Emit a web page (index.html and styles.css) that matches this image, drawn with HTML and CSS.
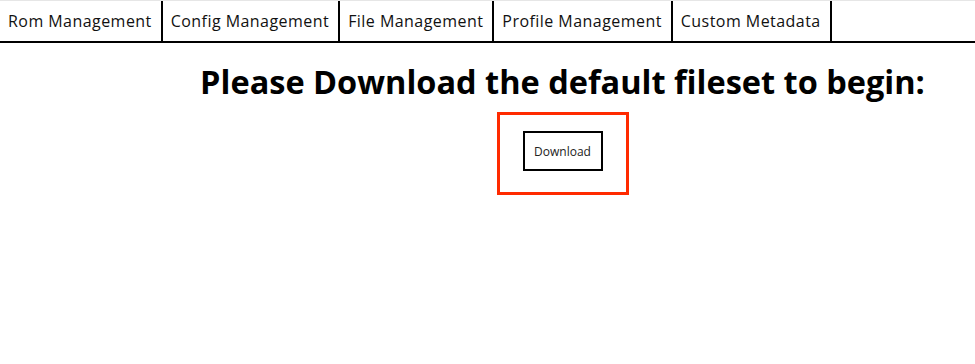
FILE: index.html
```html
<!DOCTYPE html>
<html lang="en">
<head>
  <meta charset="UTF-8">
  <meta name="viewport" content="width=device-width, initial-scale=1.0">
  <title>Fileset Manager</title>
  <link rel="stylesheet" href="styles.css">
</head>
<body>

  <nav class="tabs">
    <a class="tab">Rom Management</a>
    <a class="tab">Config Management</a>
    <a class="tab">File Management</a>
    <a class="tab">Profile Management</a>
    <a class="tab">Custom Metadata</a>
  </nav>

  <main class="content">
    <h1 class="title">Please Download the default fileset to begin:</h1>
    <div class="highlight">
      <button class="download-btn">Download</button>
    </div>
  </main>

</body>
</html>
```

FILE: styles.css
```css
body {
  margin: 0;
  font-family: "Open Sans", "Noto Sans", sans-serif;
  background: #fff;
  color: #000;
}
.tabs {
  display: flex;
  height: 43px;
  border-top: 1px solid #e6e6e6;
  border-bottom: 2px solid #000;
  box-sizing: border-box;
}
.tab {
  display: flex;
  align-items: center;
  padding: 0 9px 0 8px;
  font-size: 16px;
  letter-spacing: 0.45px;
  color: #111;
  border-right: 2px solid #000;
  cursor: pointer;
}
.content {
  display: flex;
  flex-direction: column;
  align-items: center;
  padding-left: 150px;
}
.title {
  margin: 17px 0 8px;
  font-size: 32.5px;
  font-weight: 700;
  line-height: 44px;
}
.highlight {
  border: 3px solid #ff2a00;
  padding: 16px 23px 21px;
}
.download-btn {
  display: block;
  width: 80px;
  height: 40px;
  background: #fff;
  border: 2px solid #000;
  font-family: "Open Sans", sans-serif;
  font-size: 12px;
  color: #222;
  padding: 0;
}
```
